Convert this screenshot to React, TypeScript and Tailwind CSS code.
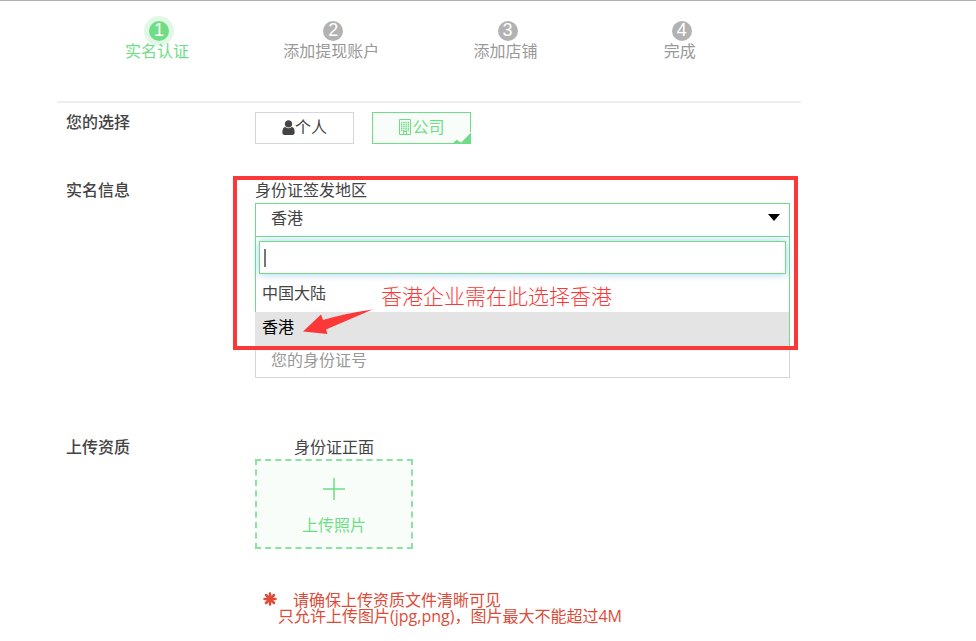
import { useState } from "react";
import type { ReactNode } from "react";

const STEPS = ["实名认证", "添加提现账户", "添加店铺", "完成"];
const REGIONS = ["中国大陆", "香港"];

function UserIcon() {
  return (
    <svg viewBox="0 0 1280 1664" className="h-4 w-[13px] shrink-0" fill="currentColor" aria-hidden="true">
      <path d="M1280 1399q0 109-62.5 187t-150.5 78h-854q-88 0-150.5-78t-62.5-187q0-85 8.5-160.5t31.5-152 58.5-131 94-89 134.5-34.5q131 128 313 128t313-128q76 0 134.5 34.5t94 89 58.5 131 31.5 152 8.5 160.5zm-256-887q0 159-112.5 271.5t-271.5 112.5-271.5-112.5-112.5-271.5 112.5-271.5 271.5-112.5 271.5 112.5 112.5 271.5z" />
    </svg>
  );
}

function BuildingIcon() {
  return (
    <svg viewBox="0 0 14 16" className="h-4 w-3.5 shrink-0" fill="none" stroke="currentColor" aria-hidden="true">
      <path d="M1.5 .5h11v15h-11z" />
      <path d="M3 3.5h8M3 5.5h8M3 7.5h8M3 9.5h8M3 11.5h8" strokeWidth="1.300" strokeDasharray="1.400 .8" />
      <path d="M5.5 15.5v-3h3v3" />
    </svg>
  );
}

function SelectedCorner() {
  return (
    <svg viewBox="0 0 19 16" className="absolute -right-px -bottom-px h-4 w-[19px]" aria-hidden="true">
      <path d="M0 16L5 11.500L8 14L19 1V16z" fill="#6edd86" />
      <path d="M4.500 9.500L9 12.500L18 3.500" fill="none" stroke="#fff" strokeWidth="3" />
    </svg>
  );
}

function Row({ title, className, children }: { title: string; className: string; children: ReactNode }) {
  return (
    <section className={`flex pr-[11px] ${className}`}>
      <h2 className="w-[198px] shrink-0 pl-[9px] font-medium">{title}</h2>
      <div className="min-w-0 flex-1">{children}</div>
    </section>
  );
}

export default function App() {
  const [kind, setKind] = useState("company");
  const [region, setRegion] = useState("香港");
  const [query, setQuery] = useState("");
  const kindBase = "relative flex h-8 w-[99px] items-center justify-center border pb-[2px]";
  const kindOn = "border-[#6edd86] bg-[#f8fdf9] text-[#6edd86]";
  const kindOff = "border-[#d3d6de] bg-white";

  return (
    <main className="border-t border-[#b0b0b0] bg-white pr-[175px] pb-4 pl-[57px] font-['Noto_Sans','Noto_Sans_CJK_SC',sans-serif] text-base/5 text-[#444]">
      <ol className="grid grid-cols-4 border-b-2 border-[#eee] pt-5 pr-8 pb-10 pl-[15px]">
        {STEPS.map((step, i) => (
          <li key={step} className={`flex flex-col items-center ${i === 0 ? "text-[#6edd86]" : "text-[#999]"}`}>
            <span
              className={`flex size-5 items-center justify-center rounded-full pb-[2px] font-['Liberation_Sans','Noto_Sans_CJK_SC',sans-serif] text-lg/5 font-medium text-white ${
                i === 0 ? "bg-[#6edd86] ring-5 ring-[#e2f8e7]" : "bg-[#b2b2b2]"
              }`}
            >
              {i + 1}
            </span>
            <span className="relative mr-1">{step}</span>
          </li>
        ))}
      </ol>

      <Row title="您的选择" className="pt-[9px]">
        <div className="flex gap-[18px]">
          <button type="button" onClick={() => setKind("person")} className={`${kindBase} ${kind === "person" ? kindOn : kindOff}`}>
            <UserIcon />
            个人
            {kind === "person" && <SelectedCorner />}
          </button>
          <button type="button" onClick={() => setKind("company")} className={`${kindBase} ${kind === "company" ? kindOn : kindOff}`}>
            <BuildingIcon />
            公司
            {kind === "company" && <SelectedCorner />}
          </button>
        </div>
      </Row>

      <Row title="实名信息" className="mt-9">
        <div className="relative">
          <label htmlFor="region" className="block">
            身份证签发地区
          </label>
          <div className="relative mt-[3px]">
            <select
              id="region"
              value={region}
              onChange={(e) => setRegion(e.target.value)}
              className="block h-[34px] w-full appearance-none border border-[#6edd86] bg-white px-[15px] pb-1 outline-none"
            >
              {REGIONS.map((r) => (
                <option key={r}>{r}</option>
              ))}
            </select>
            <svg viewBox="0 0 12 7" className="pointer-events-none absolute top-[11px] right-[10px] h-[7px] w-3" aria-hidden="true">
              <path d="M0 0h12L6 7z" fill="#000" />
            </svg>
            <div className="absolute inset-x-0 top-full border-x border-[#6edd86] bg-white">
              <div className="relative px-[3px] pt-1">
                <input
                  aria-label="搜索地区"
                  value={query}
                  onChange={(e) => setQuery(e.target.value)}
                  className="block h-[33px] w-full border border-[#6edd86] px-1 shadow-[0_0_8px_rgba(102,175,233,0.6)] outline-none"
                />
                <span className="pointer-events-none absolute top-3 left-2 h-[18px] w-[2px] bg-[#777]" />
              </div>
              <ul className="pt-1">
                {REGIONS.filter((r) => r.includes(query)).map((r) => (
                  <li key={r} className="-ml-px">
                    <button
                      type="button"
                      onClick={() => setRegion(r)}
                      className={`block h-[34px] w-full pb-1 text-left ${
                        r === region ? "bg-[#e4e4e4] pl-[7px] text-black" : "border-l border-[#6edd86] pl-[6px]"
                      }`}
                    >
                      {r}
                    </button>
                  </li>
                ))}
              </ul>
            </div>
          </div>
          <input
            aria-label="您的身份证号"
            placeholder="您的身份证号"
            className="mt-[106px] block h-[35px] w-full border border-[#d3d6de] px-[15px] pb-[2px] outline-none placeholder:text-[#999]"
          />

          {/* Guide overlay: frame, note and arrow over the open list */}
          <div className="pointer-events-none absolute -top-1 -right-2 -left-[22px] h-[174px] border-4 border-[#fb3838]" />
          <p className="pointer-events-none absolute top-[102px] left-[126px] text-[21px]/7 font-light text-[#fb3838]">
            香港企业需在此选择香港
          </p>
          <svg viewBox="0 0 70 25" className="pointer-events-none absolute top-[129px] left-12 h-[25px] w-[70px]" aria-hidden="true">
            <path d="M0 22.500L18 5.500L20 11Q44 4 69.500 .500L23 20.500L24.500 25z" fill="#fb3838" />
          </svg>
        </div>
      </Row>

      <Row title="上传资质" className="mt-[59px]">
        <div className="w-[158px]">
          <p className="text-center">身份证正面</p>
          <label className="mt-[2px] flex h-[90px] cursor-pointer flex-col items-center border-2 border-dashed border-[#8be49e] bg-[#f8fdf9] pt-[17px] text-[#6edd86]">
            <svg viewBox="0 0 22 22" className="size-[22px]" stroke="currentColor" strokeWidth="1.500" aria-hidden="true">
              <path d="M0 11h22M11 0v22" />
            </svg>
            <span className="mt-[15px]">上传照片</span>
            <input type="file" accept=".jpg,.png" className="sr-only" />
          </label>
        </div>
        <div className="mt-[43px] flex gap-px pl-2 font-['Open_Sans','Noto_Sans_CJK_SC',sans-serif] text-base/4 text-[#dd4b39]">
          <svg viewBox="0 0 14 14" className="size-[14px] shrink-0" stroke="currentColor" strokeWidth="2.500" strokeLinecap="round" aria-hidden="true">
            <path d="M7 1.500v11M1.500 7h11M3 3l8 8M11 3l-8 8" />
          </svg>
          <div>
            <p className="pl-[15px]">请确保上传资质文件清晰可见</p>
            <p>只允许上传图片(jpg,png)，图片最大不能超过4M</p>
          </div>
        </div>
      </Row>
    </main>
  );
}
